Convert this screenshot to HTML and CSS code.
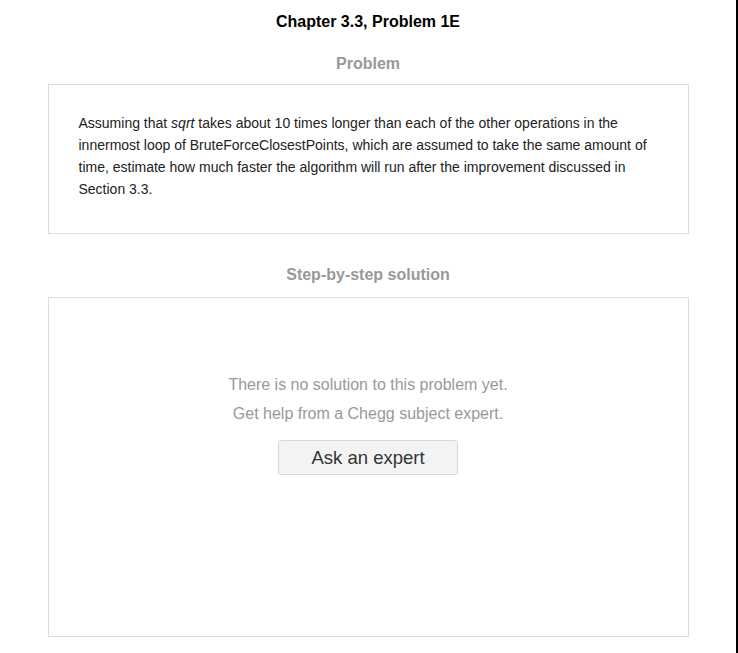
FILE: index.html
```html
<!DOCTYPE html>
<html>
<head>
<meta charset="utf-8">
<link rel="stylesheet" href="styles.css">
</head>
<body>
<div class="page">
  <h1 class="title">Chapter 3.3, Problem 1E</h1>
  <h2 class="section-title">Problem</h2>
  <div class="problem-box">
    <p class="problem-text">Assuming that <i>sqrt</i> takes about 10 times longer than each of the other operations in the innermost loop of BruteForceClosestPoints, which are assumed to take the same amount of time, estimate how much faster the algorithm will run after the improvement discussed in Section 3.3.</p>
  </div>
  <h2 class="section-title step-title">Step-by-step solution</h2>
  <div class="solution-box">
    <p class="empty-line">There is no solution to this problem yet.</p>
    <p class="empty-line">Get help from a Chegg subject expert.</p>
    <button class="ask-btn">Ask an expert</button>
  </div>
</div>
</body>
</html>
```
FILE: styles.css
```css
html, body {
  margin: 0;
  padding: 0;
  background: #fff;
}
body {
  font-family: "Liberation Sans", Arial, sans-serif;
}
.page {
  width: 736px;
  min-height: 653px;
  border-right: 2px solid #000;
  display: flex;
  flex-direction: column;
  align-items: center;
}
.title {
  margin: 13px 0 0;
  font-size: 16px;
  line-height: 18px;
  font-weight: 700;
  color: #000;
  text-align: center;
}
.section-title {
  margin: 24px 0 0;
  font-size: 16px;
  line-height: 18px;
  font-weight: 700;
  color: #999;
  text-align: center;
}
.step-title {
  margin-top: 32px;
}
.problem-box {
  box-sizing: border-box;
  width: 641px;
  margin-top: 11px;
  border: 1px solid #dcdcdc;
  padding: 27px 30px 33px 30px;
}
.problem-text {
  margin: 0;
  font-size: 14px;
  line-height: 22px;
  color: #222;
}
.solution-box {
  box-sizing: border-box;
  width: 641px;
  height: 340px;
  margin-top: 13px;
  border: 1px solid #dcdcdc;
  padding-top: 72px;
  display: flex;
  flex-direction: column;
  align-items: center;
}
.empty-line {
  margin: 0;
  font-size: 16px;
  line-height: 29px;
  color: #999;
}
.ask-btn {
  margin-top: 12px;
  box-sizing: border-box;
  width: 180px;
  height: 35px;
  background: #f3f3f3;
  border: 1px solid #d8d8d8;
  border-radius: 3px;
  font-family: "Liberation Sans", Arial, sans-serif;
  font-size: 18.5px;
  color: #333;
  padding: 0;
}
```
